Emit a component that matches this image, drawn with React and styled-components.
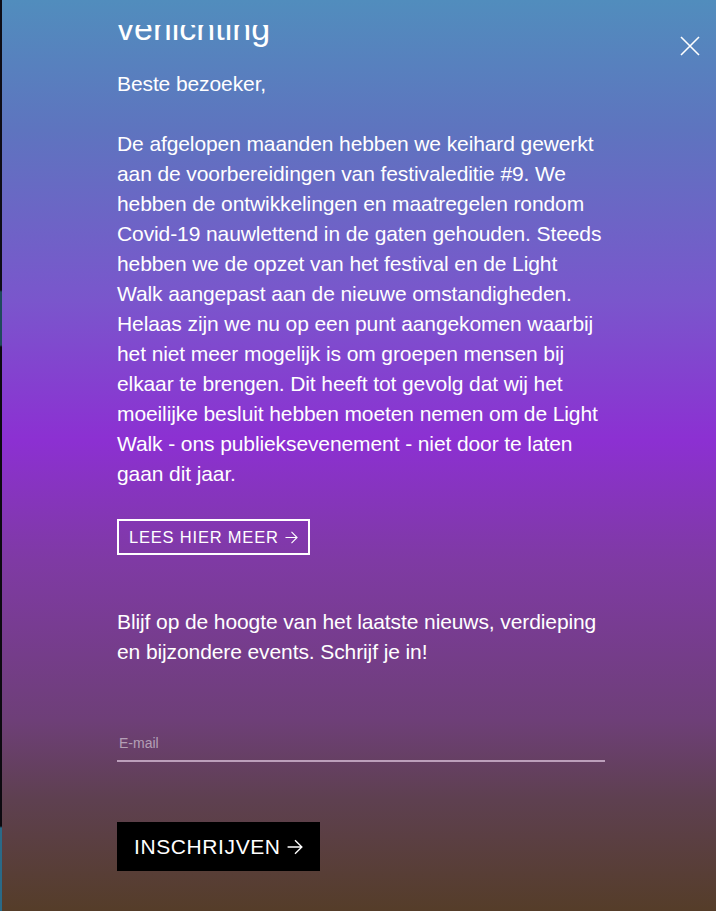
import React from "react";
import styled, { createGlobalStyle } from "styled-components";

const GlobalStyle = createGlobalStyle`
  html, body {
    margin: 0;
    padding: 0;
  }
  body {
    background: linear-gradient(
      to bottom,
      #0e0d16 0px,
      #0e0d16 290px,
      #1f4a5c 292px,
      #1f4a5c 345px,
      #0c0a10 347px,
      #0c0a10 826px,
      #2a6a88 828px,
      #2a6a88 911px
    );
    font-family: "Liberation Sans", Arial, sans-serif;
    overflow: hidden;
  }
`;

const Panel = styled.div`
  position: relative;
  margin-left: 2px;
  height: 911px;
  padding-top: 25px;
  box-sizing: border-box;
  color: #fff;
  background: linear-gradient(
    to bottom,
    #518dbd 0px,
    #5e74bf 130px,
    #7a56cc 300px,
    #8c30d2 440px,
    #7f3aa4 560px,
    #6e3f78 720px,
    #5e4050 800px,
    #553d29 911px
  );
`;

const Close = styled.button`
  position: absolute;
  top: 33px;
  left: 675px;
  width: 26px;
  height: 26px;
  padding: 0;
  border: 0;
  background: none;
  cursor: pointer;
  display: flex;
  align-items: center;
  justify-content: center;
`;

const Scroll = styled.div`
  height: 886px;
  overflow: hidden;
`;

const Content = styled.div`
  width: 488px;
  margin-left: 115px;
`;

const Heading = styled.h2`
  margin: -17px 0 21px;
  font-size: 34px;
  line-height: 40px;
  font-weight: 400;
`;

const Text = styled.p`
  margin: 0 0 ${(p) => p.$gap || 0}px;
  font-size: 21px;
  line-height: 30px;
  letter-spacing: -0.1px;
  white-space: nowrap;
`;

const OutlineButton = styled.button`
  display: inline-flex;
  align-items: center;
  gap: 6px;
  height: 36px;
  box-sizing: border-box;
  padding: 0 10px 0 10px;
  margin: 30px 0 52px;
  border: 2px solid #fff;
  background: transparent;
  color: #fff;
  font-family: inherit;
  font-size: 16.5px;
  letter-spacing: 0.8px;
  text-transform: uppercase;
`;

const EmailInput = styled.input`
  display: block;
  width: 488px;
  height: 40px;
  margin: 55px 0 60px;
  padding: 4px 2px 0;
  box-sizing: border-box;
  border: 0;
  border-bottom: 2px solid rgba(235, 210, 235, 0.65);
  background: transparent;
  color: #fff;
  font-family: inherit;
  font-size: 14px;
  outline: none;
  &::placeholder {
    color: rgba(255, 255, 255, 0.5);
  }
`;

const SubmitButton = styled.button`
  display: inline-flex;
  align-items: center;
  gap: 6px;
  height: 49px;
  box-sizing: border-box;
  padding: 0 17px;
  border: 0;
  background: #000;
  color: #fff;
  font-family: inherit;
  font-size: 21px;
  letter-spacing: 0.6px;
  text-transform: uppercase;
`;

const Arrow = ({ size = 14 }) => (
  <svg width={size} height={size} viewBox="0 0 14 14" fill="none">
    <path
      d="M0.5 7 H13 M7 1 L13 7 L7 13"
      stroke="#fff"
      strokeWidth="1.2"
    />
  </svg>
);

const CloseIcon = () => (
  <svg width="20" height="20" viewBox="0 0 20 20" fill="none">
    <path d="M1 1 L19 19 M19 1 L1 19" stroke="#fff" strokeWidth="1.6" />
  </svg>
);

const intro = [
  "De afgelopen maanden hebben we keihard gewerkt",
  "aan de voorbereidingen van festivaleditie #9. We",
  "hebben de ontwikkelingen en maatregelen rondom",
  "Covid-19 nauwlettend in de gaten gehouden. Steeds",
  "hebben we de opzet van het festival en de Light",
  "Walk aangepast aan de nieuwe omstandigheden.",
  "Helaas zijn we nu op een punt aangekomen waarbij",
  "het niet meer mogelijk is om groepen mensen bij",
  "elkaar te brengen. Dit heeft tot gevolg dat wij het",
  "moeilijke besluit hebben moeten nemen om de Light",
  "Walk - ons publieksevenement - niet door te laten",
  "gaan dit jaar.",
];

const signup = [
  "Blijf op de hoogte van het laatste nieuws, verdieping",
  "en bijzondere events. Schrijf je in!",
];

const Lines = ({ lines }) =>
  lines.map((line, i) => (
    <React.Fragment key={i}>
      {line}
      {i < lines.length - 1 && <br />}
    </React.Fragment>
  ));

const App = () => {
  return (
    <>
      <GlobalStyle />
      <Panel>
        <Close aria-label="Sluiten">
          <CloseIcon />
        </Close>
        <Scroll>
          <Content>
            <Heading>verlichting</Heading>
            <Text $gap={30}>Beste bezoeker,</Text>
            <Text>
              <Lines lines={intro} />
            </Text>
            <OutlineButton>
              Lees hier meer <Arrow size={13} />
            </OutlineButton>
            <Text>
              <Lines lines={signup} />
            </Text>
            <EmailInput type="email" placeholder="E-mail" />
            <SubmitButton>
              Inschrijven <Arrow size={16} />
            </SubmitButton>
          </Content>
        </Scroll>
      </Panel>
    </>
  );
};

export default App;
